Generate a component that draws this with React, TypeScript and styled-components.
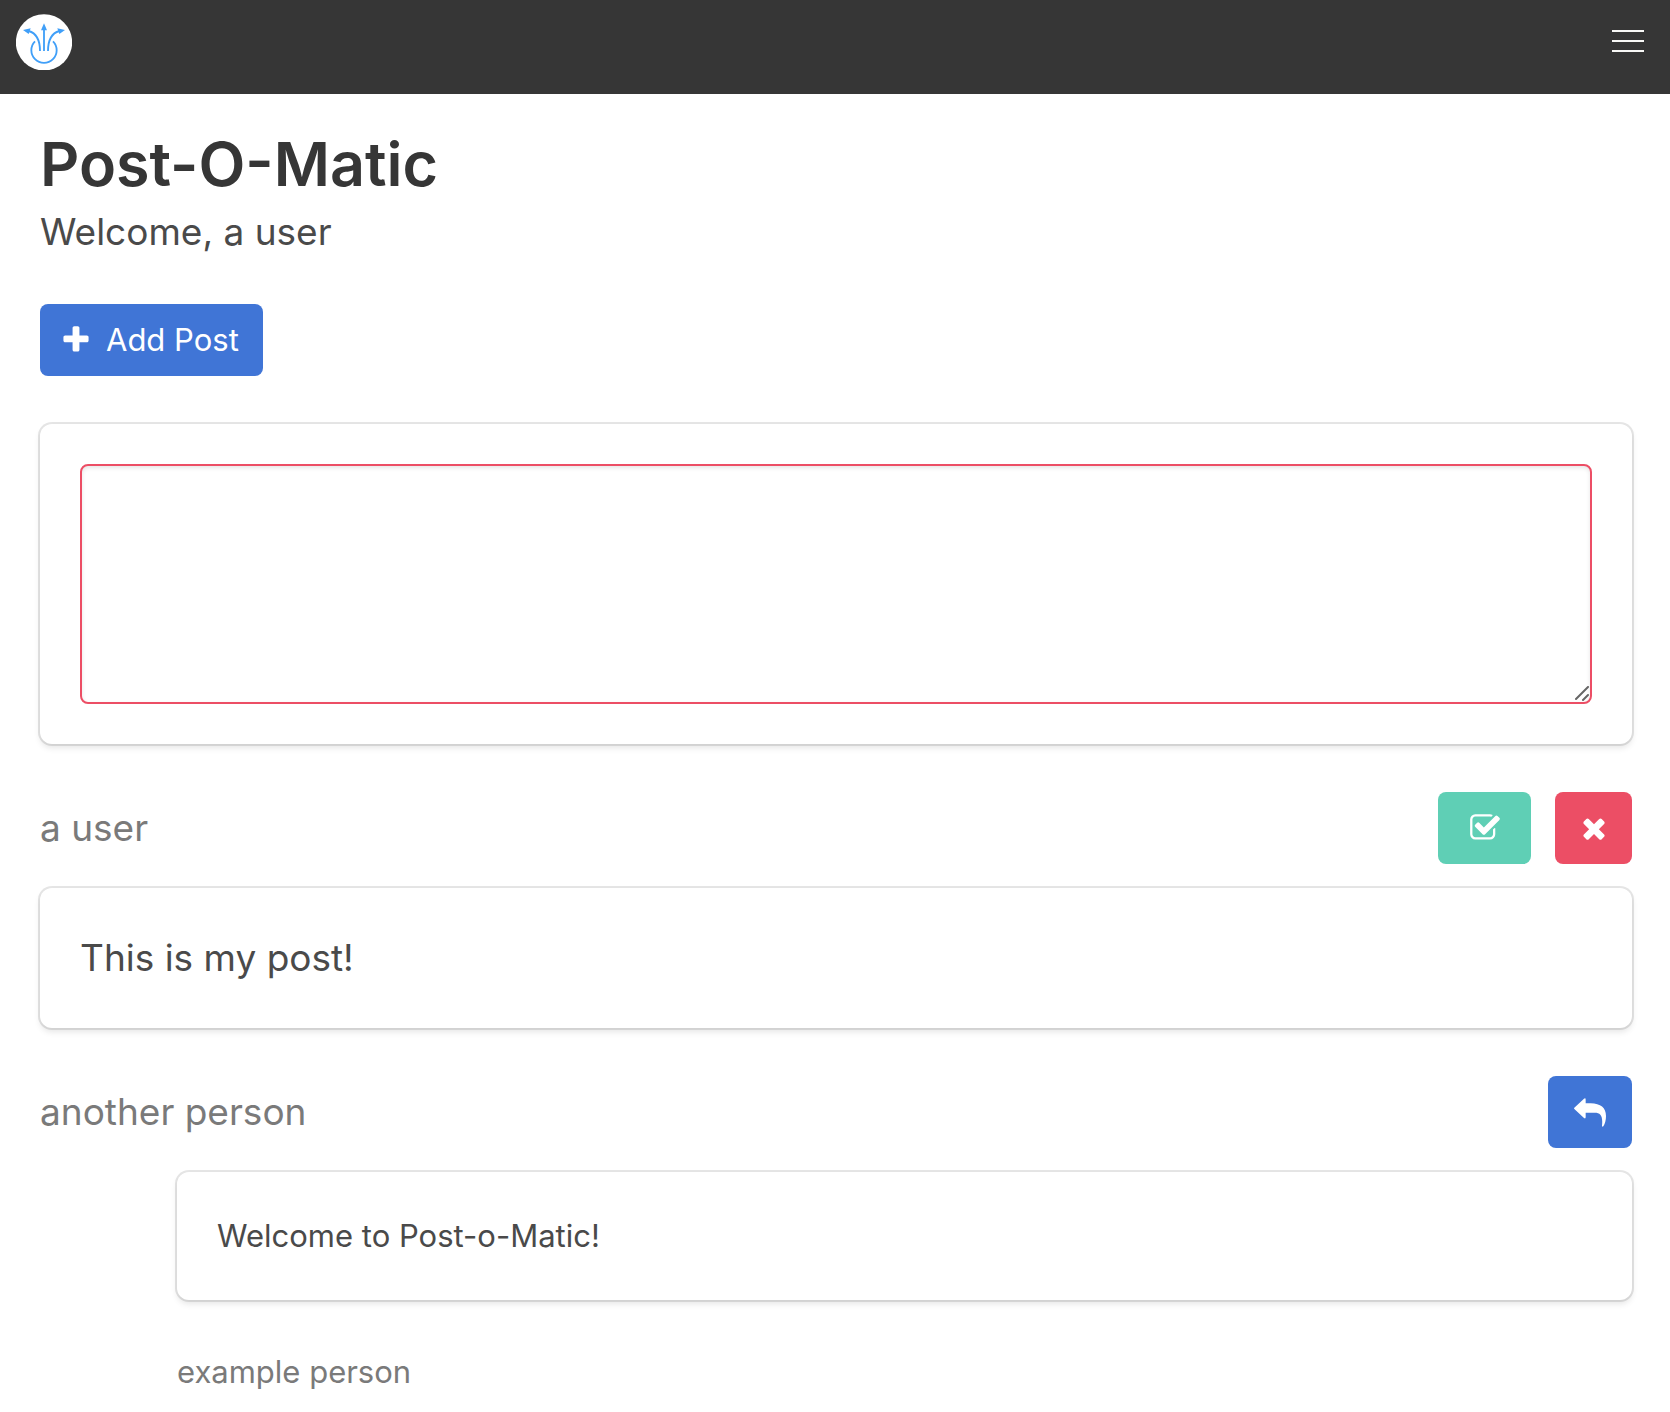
import React from "react";
import styled, { createGlobalStyle } from "styled-components";

const palette = {
  dark: "#363636",
  text: "#4a4a4a",
  muted: "#7a7a7a",
  link: "#4075d6",
  success: "#5fcfb5",
  danger: "#ec4e65",
  logo: "#409ff8",
};

const GlobalStyle = createGlobalStyle`
  *, *::before, *::after { box-sizing: border-box; }
  body {
    margin: 0;
    background: #fff;
    color: ${palette.text};
    font-family: Inter, Roboto, "Liberation Sans", sans-serif;
    font-size: 31px;
    line-height: 48px;
  }
  h1, p { margin: 0; }
`;

const Navbar = styled.nav`
  display: flex;
  align-items: flex-start;
  justify-content: space-between;
  height: 94px;
  padding: 14px 16px;
  background: ${palette.dark};
`;

const Brand = styled.a`
  display: flex;
`;

const Burger = styled.button`
  display: flex;
  flex-direction: column;
  align-items: center;
  justify-content: center;
  gap: 8px;
  width: 52px;
  height: 54px;
  padding: 0;
  border: 0;
  background: transparent;
  cursor: pointer;
`;

const BurgerLine = styled.span`
  width: 32px;
  height: 2px;
  background: #f8f8f6;
`;

const Page = styled.main`
  padding: 34px 38px 16px 40px;
`;

const Title = styled.h1`
  color: ${palette.dark};
  font-size: 61px;
  font-weight: 600;
  line-height: 72px;
`;

const Subtitle = styled.p`
  font-size: 37px;
  line-height: 64px;
`;

const Button = styled.button<{ $color: string; $width?: number }>`
  display: inline-flex;
  align-items: center;
  justify-content: center;
  gap: 14px;
  width: ${(p) => (p.$width ? `${p.$width}px` : "auto")};
  height: 72px;
  padding: ${(p) => (p.$width ? "0" : "0 24px 0 20px")};
  border: 0;
  border-radius: 8px;
  background: ${(p) => p.$color};
  color: #fff;
  font: inherit;
  cursor: pointer;
`;

const Toolbar = styled.div`
  display: flex;
  margin-top: 40px;
`;

const Card = styled.div<{ $small?: boolean }>`
  padding: 40px;
  border-radius: 12px;
  background: #fff;
  box-shadow: 0 4px 6px rgba(10, 10, 10, 0.1), 0 0 0 2px rgba(10, 10, 10, 0.1);
  font-size: ${(p) => (p.$small ? 31 : 37)}px;
  line-height: ${(p) => (p.$small ? 48 : 60)}px;
`;

const Composer = styled.form`
  margin-top: 48px;
`;

const Field = styled.div`
  position: relative;
  display: flex;
`;

const TextArea = styled.textarea`
  display: block;
  width: 100%;
  height: 240px;
  padding: 20px;
  border: 2px solid ${palette.danger};
  border-radius: 8px;
  outline: 0;
  box-shadow: inset 0 2px 4px rgba(10, 10, 10, 0.1);
  background: #fff;
  color: ${palette.dark};
  font: inherit;
  resize: none;
`;

const Grip = styled.svg`
  position: absolute;
  right: 2px;
  bottom: 2px;
  pointer-events: none;
`;

const Post = styled.article`
  margin-top: 48px;
`;

const PostHeader = styled.header`
  display: flex;
  align-items: center;
  justify-content: space-between;
  height: 72px;
  margin-bottom: 24px;
`;

const Author = styled.p<{ $small?: boolean }>`
  color: ${palette.muted};
  font-size: ${(p) => (p.$small ? 31 : 37)}px;
  line-height: ${(p) => (p.$small ? 48 : 60)}px;
`;

const Actions = styled.div`
  display: flex;
  gap: 24px;
`;

const Thread = styled.div`
  display: grid;
  gap: 48px;
  margin-left: 137px;
`;

const Glyph = ({ d }: { d: string }) => (
  <svg width="32" height="32" viewBox="0 0 1792 1792" fill="currentColor" aria-hidden="true">
    <path d={d} />
  </svg>
);

const PLUS =
  "M1600 736v192q0 40-28 68t-68 28h-416v416q0 40-28 68t-68 28h-192q-40 0-68-28t-28-68v-416h-416q-40 0-68-28t-28-68v-192q0-40 28-68t68-28h416v-416q0-40 28-68t68-28h192q40 0 68 28t28 68v416h416q40 0 68 28t28 68z";
const TIMES =
  "M1490 1322q0 40-28 68l-136 136q-28 28-68 28t-68-28l-294-294-294 294q-28 28-68 28t-68-28l-136-136q-28-28-28-68t28-68l294-294-294-294q-28-28-28-68t28-68l136-136q28-28 68-28t68 28l294 294 294-294q28-28 68-28t68 28l136 136q28 28 28 68t-28 68l-294 294 294 294q28 28 28 68z";
const CHECK =
  "M1472 930v318q0 119-84.5 203.5t-203.5 84.5h-832q-119 0-203.5-84.5t-84.5-203.5v-832q0-119 84.5-203.5t203.5-84.5h832q63 0 117 25 15 7 18 23 3 17-9 29l-49 49q-10 10-23 10-3 0-9-2-23-6-45-6h-832q-66 0-113 47t-47 113v832q0 66 47 113t113 47h832q66 0 113-47t47-113v-254q0-13 9-22l64-64q10-10 23-10 6 0 12 3 20 8 20 29zm231-489l-814 814q-24 24-57 24t-57-24l-430-430q-24-24-24-57t24-57l110-110q24-24 57-24t57 24l263 263 647-647q24-24 57-24t57 24l110 110q24 24 24 57t-24 57z";

const ReplyIcon = () => (
  <svg width="32" height="29" viewBox="0 0 96 87" fill="currentColor" aria-hidden="true">
    <path d="M1 29 30 2Q35-2 35 5V16H50C80 17 96 29 96 54 96 66 93 77 88 85 86 87 84 86 84 83 87 53 80 44 62 44H35V57Q35 64 30 60L1 33Q-1 31 1 29Z" />
  </svg>
);

const Logo = () => (
  <svg width="56" height="56" viewBox="0 0 168 168" fill="none" aria-hidden="true">
    <circle cx="84" cy="85" r="84.5" fill="#fff" />
    <g stroke={palette.logo} strokeWidth="5.5">
      <path d="M57 82A38 38 0 1 0 111 82" />
      <path d="M84 111V44" />
      <path d="M72 111C72 78 62 58 38 51" />
      <path d="M96 111C96 78 106 58 130 51" />
    </g>
    <g fill={palette.logo}>
      <path d="M84 28 75 49H93Z" />
      <path d="M21 48 44 43 38 60Z" />
      <path d="M147 48 124 43 130 60Z" />
    </g>
  </svg>
);

export default function App() {
  return (
    <>
      <GlobalStyle />
      <Navbar>
        <Brand href="#" aria-label="Home">
          <Logo />
        </Brand>
        <Burger type="button" aria-label="Menu">
          <BurgerLine />
          <BurgerLine />
          <BurgerLine />
        </Burger>
      </Navbar>
      <Page>
        <Title>Post-O-Matic</Title>
        <Subtitle>Welcome, a user</Subtitle>
        <Toolbar>
          <Button type="button" $color={palette.link}>
            <Glyph d={PLUS} />
            Add Post
          </Button>
        </Toolbar>
        <Composer>
          <Card>
            <Field>
              <TextArea aria-label="Post text" />
              <Grip width="16" height="16" viewBox="0 0 16 16" aria-hidden="true">
                <path d="M2 13 14 1M9 14l5-5" stroke="#666" strokeWidth="2" strokeLinecap="round" />
              </Grip>
            </Field>
          </Card>
        </Composer>
        <Post>
          <PostHeader>
            <Author>a user</Author>
            <Actions>
              <Button type="button" aria-label="Save" $color={palette.success} $width={93}>
                <Glyph d={CHECK} />
              </Button>
              <Button type="button" aria-label="Delete" $color={palette.danger} $width={77}>
                <Glyph d={TIMES} />
              </Button>
            </Actions>
          </PostHeader>
          <Card>This is my post!</Card>
        </Post>
        <Post>
          <PostHeader>
            <Author>another person</Author>
            <Actions>
              <Button type="button" aria-label="Reply" $color={palette.link} $width={84}>
                <ReplyIcon />
              </Button>
            </Actions>
          </PostHeader>
          <Thread>
            <Card $small>Welcome to Post-o-Matic!</Card>
            <Author $small>example person</Author>
          </Thread>
        </Post>
      </Page>
    </>
  );
}
